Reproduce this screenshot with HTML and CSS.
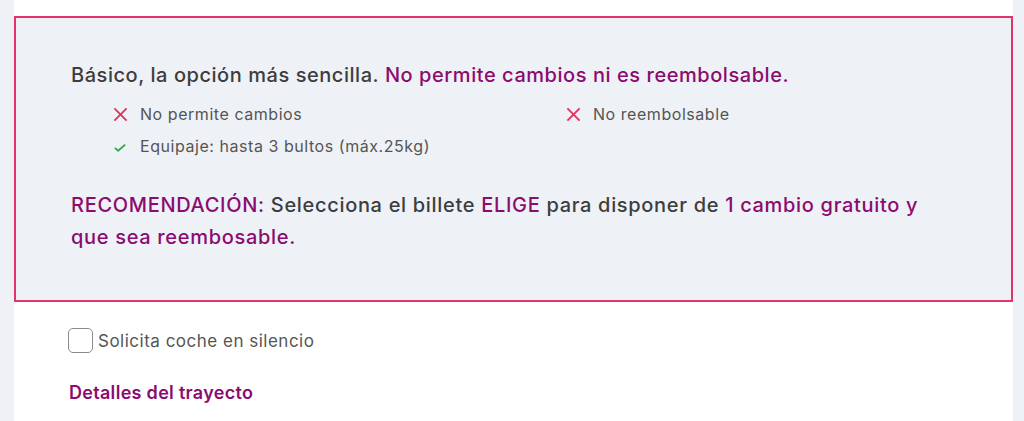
FILE: index.html
```html
<!DOCTYPE html>
<html lang="es">
<head>
<meta charset="utf-8">
<link rel="stylesheet" href="styles.css">
</head>
<body>
<div class="card">
  <div class="fare-box">
    <p class="title">Básico, la opción más sencilla. <span class="hl">No permite cambios ni es reembolsable.</span></p>
    <ul class="features">
      <li><svg class="ico" viewBox="0 0 16 16"><path d="M1.5 1.5 L14.5 14.5 M14.5 1.5 L1.5 14.5" stroke="#e0345f" stroke-width="2" fill="none"/></svg>No permite cambios</li>
      <li><svg class="ico" viewBox="0 0 16 16"><path d="M1.5 1.5 L14.5 14.5 M14.5 1.5 L1.5 14.5" stroke="#e0345f" stroke-width="2" fill="none"/></svg>No reembolsable</li>
      <li><svg class="ico" viewBox="0 0 16 16"><path d="M2 9.5 L5.5 12.5 L13 6" stroke="#2fa84f" stroke-width="2" fill="none"/></svg>Equipaje: hasta 3 bultos (máx.25kg)</li>
    </ul>
    <p class="reco"><span class="hl">RECOMENDACIÓN:</span> Selecciona el billete <span class="hl">ELIGE</span> para disponer de <span class="hl">1 cambio gratuito y que sea reembosable.</span></p>
  </div>
  <label class="check"><span class="box"></span>Solicita coche en silencio</label>
  <h3 class="section">Detalles del trayecto</h3>
</div>
</body>
</html>
```
FILE: styles.css
```css
html, body {
  margin: 0;
  padding: 0;
}
body {
  background: #eef1f5;
  font-family: Inter, "Noto Sans", sans-serif;
  height: 421px;
  overflow: hidden;
}
.card {
  background: #ffffff;
  margin: 0 11px 0 14px;
  padding-top: 16px;
  height: 405px;
}
.fare-box {
  background: #eef2f6;
  border: 2px solid #e0346a;
  box-sizing: border-box;
  height: 286px;
  padding: 44px 0 0 55px;
}
.title {
  margin: 0;
  font-size: 20px;
  font-weight: 500;
  color: #3d3d3d;
  letter-spacing: 0.55px;
  line-height: 26px;
}
.hl {
  color: #8c0b6f;
}
.features {
  list-style: none;
  margin: 10px 0 0 0;
  padding: 0 0 0 42px;
  display: grid;
  grid-template-columns: 453px auto;
}
.features li {
  display: flex;
  align-items: center;
  gap: 12px;
  font-size: 16px;
  letter-spacing: 0.55px;
  color: #555555;
  line-height: 32px;
}
.ico {
  width: 15px;
  height: 15px;
  flex: none;
}
.reco {
  margin: 27px 0 0 0;
  font-size: 20px;
  font-weight: 500;
  color: #3d3d3d;
  line-height: 32px;
  letter-spacing: 0.68px;
  max-width: 880px;
}
.check {
  display: flex;
  align-items: center;
  gap: 5px;
  margin: 26px 0 0 54px;
  font-size: 17px;
  letter-spacing: 0.5px;
  color: #555555;
}
.box {
  width: 23px;
  height: 23px;
  border: 1px solid #8a8a8a;
  border-radius: 5px;
  background: #fff;
}
.section {
  margin: 29px 0 0 55px;
  font-size: 18px;
  font-weight: 600;
  color: #8c0b6f;
  letter-spacing: 0.3px;
}
```
